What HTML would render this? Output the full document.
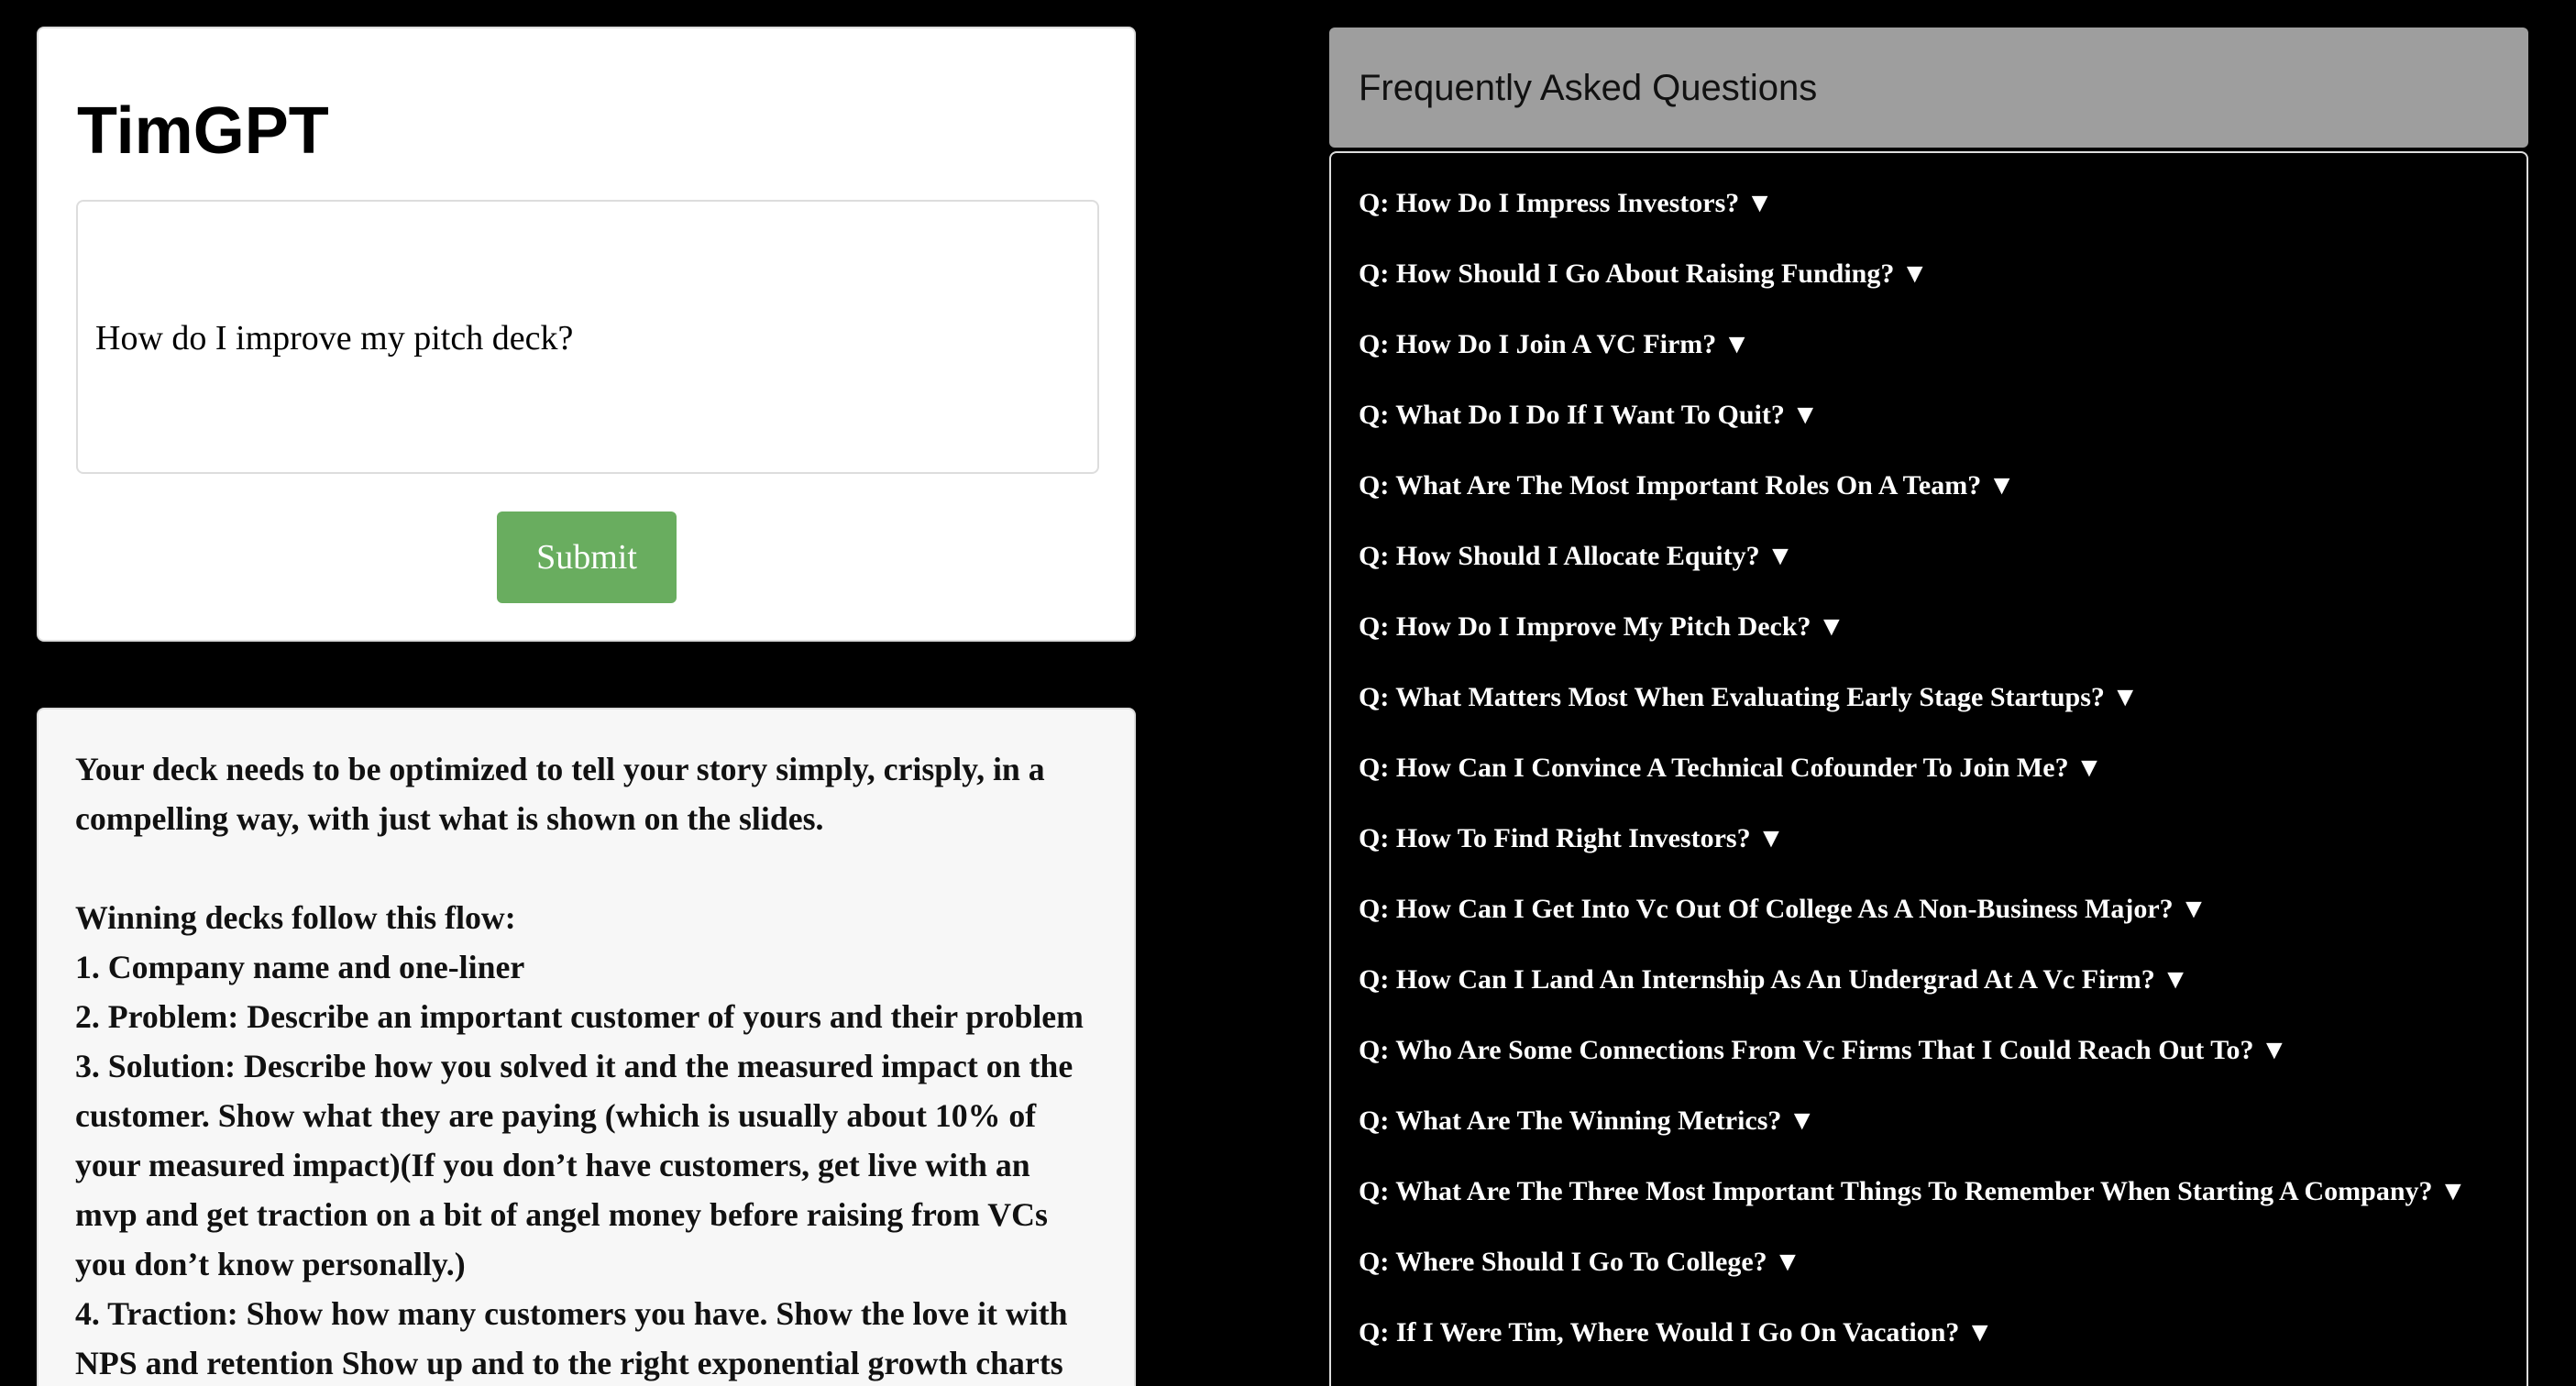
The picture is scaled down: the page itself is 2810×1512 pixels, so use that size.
<!DOCTYPE html>
<html style="overflow:hidden;height:1512px"><head><style>
body{margin:0;width:2810px;height:1512px;background:#000;overflow:hidden;position:relative;font-family:"Liberation Serif",serif}
.card1{position:absolute;left:40px;top:29px;width:1199px;height:671px;background:#fff;border-radius:8px;box-sizing:border-box;border:2px solid #ddd}
h1{position:absolute;left:42px;top:71px;margin:0;font:bold 72px "Liberation Sans",sans-serif;color:#000}
.ta{position:absolute;left:41px;top:187px;width:1116px;height:299px;box-sizing:border-box;border:2px solid #ddd;border-radius:8px}
.ta span{position:absolute;left:19px;top:127px;font-size:38px;color:#000}
.btn{position:absolute;left:500px;top:527px;width:196px;height:100px;background:#69ad5f;border-radius:6px;color:#fff;font-size:38px;text-align:center;line-height:100px}
.card2{position:absolute;left:40px;top:772px;width:1199px;height:760px;background:#f7f7f7;border-radius:8px;box-sizing:border-box;border:2px solid #ddd}
.ans{position:absolute;left:40px;top:38px;font-weight:bold;font-size:35.8px;line-height:54px;color:#111;white-space:nowrap}
.faqh{position:absolute;left:1450px;top:30px;width:1308px;height:131px;background:#9e9e9e;border-radius:6px;font:40px "Liberation Sans",sans-serif;color:#111;line-height:133px;padding-left:32px;box-sizing:border-box}
.faq{position:absolute;left:1450px;top:165px;width:1308px;height:1370px;border:2px solid #ddd;border-radius:8px;box-sizing:border-box}
.faq div{position:absolute;left:30px;font-weight:bold;font-size:30px;color:#fff;white-space:nowrap;line-height:40px}
</style></head><body>
<div class="card1"><h1>TimGPT</h1>
<div class="ta"><span>How do I improve my pitch deck?</span></div>
<div class="btn">Submit</div></div>
<div class="card2"><div class="ans">Your deck needs to be optimized to tell your story simply, crisply, in a<br>compelling way, with just what is shown on the slides.<br><br>Winning decks follow this flow:<br>1. Company name and one-liner<br>2. Problem: Describe an important customer of yours and their problem<br>3. Solution: Describe how you solved it and the measured impact on the<br>customer. Show what they are paying (which is usually about 10% of<br>your measured impact)(If you don’t have customers, get live with an<br>mvp and get traction on a bit of angel money before raising from VCs<br>you don’t know personally.)<br>4. Traction: Show how many customers you have. Show the love it with<br>NPS and retention Show up and to the right exponential growth charts</div></div>
<div class="faqh">Frequently Asked Questions</div>
<div class="faq">
<div style="top:35px">Q: How Do I Impress Investors? ▼</div>
<div style="top:112px">Q: How Should I Go About Raising Funding? ▼</div>
<div style="top:189px">Q: How Do I Join A VC Firm? ▼</div>
<div style="top:266px">Q: What Do I Do If I Want To Quit? ▼</div>
<div style="top:343px">Q: What Are The Most Important Roles On A Team? ▼</div>
<div style="top:420px">Q: How Should I Allocate Equity? ▼</div>
<div style="top:497px">Q: How Do I Improve My Pitch Deck? ▼</div>
<div style="top:574px">Q: What Matters Most When Evaluating Early Stage Startups? ▼</div>
<div style="top:651px">Q: How Can I Convince A Technical Cofounder To Join Me? ▼</div>
<div style="top:728px">Q: How To Find Right Investors? ▼</div>
<div style="top:805px">Q: How Can I Get Into Vc Out Of College As A Non-Business Major? ▼</div>
<div style="top:882px">Q: How Can I Land An Internship As An Undergrad At A Vc Firm? ▼</div>
<div style="top:959px">Q: Who Are Some Connections From Vc Firms That I Could Reach Out To? ▼</div>
<div style="top:1036px">Q: What Are The Winning Metrics? ▼</div>
<div style="top:1113px">Q: What Are The Three Most Important Things To Remember When Starting A Company? ▼</div>
<div style="top:1190px">Q: Where Should I Go To College? ▼</div>
<div style="top:1267px">Q: If I Were Tim, Where Would I Go On Vacation? ▼</div>
</div>
</body></html>
